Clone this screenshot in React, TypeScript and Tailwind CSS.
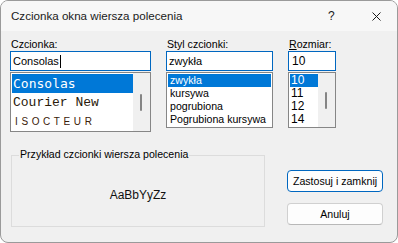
export default function App() {
  const styles = ["zwykła", "kursywa", "pogrubiona", "Pogrubiona kursywa"];
  const sizes = ["10", "11", "12", "14"];
  return (
    <div className="w-[398px] h-[243px] bg-white">
      <div className="w-[398px] h-[243px] rounded-[8px] border border-[#9a9a9a] bg-[#f0f0f0] overflow-hidden flex flex-col font-['Liberation_Sans',Arial,sans-serif] text-[10.6px] text-black">
        {/* title bar */}
        <div className="h-[30px] shrink-0 bg-[#f7f7f7] flex items-center relative">
          <div className="pl-[10px] text-[11.6px] leading-[14px] text-[#1a1a1a]">Czcionka okna wiersza polecenia</div>
          <div className="absolute left-[327px] top-[8px] text-[12px] leading-[14px] text-[#1a1a1a]">?</div>
          <svg className="absolute left-[371px] top-[11px]" width="9" height="9" viewBox="0 0 9 9">
            <path d="M0.5 0.5 L8.5 8.5 M8.5 0.5 L0.5 8.5" stroke="#1a1a1a" strokeWidth="1" fill="none" />
          </svg>
        </div>
        {/* body */}
        <div className="flex-1 pt-[7px] pl-[9px] flex flex-col">
          <div className="flex items-start gap-[15px]">
            {/* font column */}
            <div className="w-[141px] flex flex-col">
              <div className="h-[13px] leading-[13px] pl-[1px]">Czcionka:</div>
              <div className="h-[20px] border border-[#0067c0] bg-white flex items-center pl-[2px] leading-[13px] text-[11px]">
                <span>Consolas</span>
                <span className="inline-block w-[1px] h-[13px] bg-black ml-[1px]" />
              </div>
              <div className="mt-[1px] h-[60px] border border-[#868686] bg-white flex">
                <div className="flex-1 pt-[1px] pl-[1px] flex flex-col">
                  <div className="h-[19px] bg-[#0078d7] text-white pl-[1px] font-['DejaVu_Sans_Mono',monospace] text-[13px] leading-[19px]">Consolas</div>
                  <div className="h-[19px] pl-[1px] font-['Liberation_Mono',monospace] text-[13px] leading-[19px] text-[#2a1a0a]">Courier New</div>
                  <div className="h-[19px] pl-[3px] text-[10px] leading-[19px] tracking-[3.6px] text-[#3a2008]">ISOCTEUR</div>
                </div>
                <div className="w-[17px] bg-[#f0f0f0] relative">
                  <div className="absolute left-[7px] top-[21px] w-[2px] h-[17px] rounded-full bg-[#858585]" />
                </div>
              </div>
            </div>
            {/* style column */}
            <div className="w-[107px] flex flex-col">
              <div className="h-[13px] leading-[13px] pl-[1px]">Styl czcionki:</div>
              <div className="h-[20px] border border-[#0067c0] bg-white flex items-center pl-[2px] leading-[13px] text-[11px]">zwykła</div>
              <div className="mt-[1px] h-[56px] border border-[#868686] bg-white p-[1px] flex flex-col">
                {styles.map((s, i) => (
                  <div
                    key={s}
                    className={
                      i === 0
                        ? "h-[13px] leading-[13px] pl-[2px] bg-[#0078d7] text-white"
                        : "h-[13px] leading-[13px] pl-[2px]"
                    }
                  >
                    {s}
                  </div>
                ))}
              </div>
            </div>
            {/* size column */}
            <div className="w-[48px] flex flex-col">
              <div className="h-[13px] leading-[13px] pl-[1px]">
                <span className="underline">R</span>ozmiar:
              </div>
              <div className="h-[20px] border border-[#0067c0] bg-white flex items-center pl-[3px] text-[12px] leading-[14px]">10</div>
              <div className="mt-[1px] h-[56px] border border-[#868686] bg-white flex">
                <div className="flex-1 pt-[1px] pl-[1px] flex flex-col">
                  {sizes.map((s, i) => (
                    <div
                      key={s}
                      className={
                        i === 0
                          ? "h-[13px] leading-[13px] pl-[1px] text-[12px] bg-[#0078d7] text-white"
                          : "h-[13px] leading-[13px] pl-[1px] text-[12px]"
                      }
                    >
                      {s}
                    </div>
                  ))}
                </div>
                <div className="w-[17px] bg-[#f0f0f0] relative">
                  <div className="absolute left-[7px] top-[19px] w-[2px] h-[17px] rounded-full bg-[#858585]" />
                </div>
              </div>
            </div>
          </div>
          {/* bottom row */}
          <div className="flex items-start mt-[23px]">
            <div className="ml-[1px] w-[254px] h-[72px] border border-[#dcdcdc] relative">
              <div className="absolute left-[7px] -top-[8px] px-[1px] bg-[#f0f0f0] leading-[13px]">Przykład czcionki wiersza polecenia</div>
              <div className="pt-[32px] text-center text-[12px] leading-[14px] text-[#111]">AaBbYyZz</div>
            </div>
            <div className="ml-[22px] mt-[15px] flex flex-col gap-[11px]">
              <div className="w-[96px] h-[22px] rounded-[4px] border border-[#0067c0] bg-[#fdfdfd] flex items-center justify-center leading-[13px]">Zastosuj i zamknij</div>
              <div className="w-[96px] h-[22px] rounded-[4px] border border-[#d0d0d0] border-b-[#b8b8b8] bg-[#fdfdfd] flex items-center justify-center leading-[13px]">Anuluj</div>
            </div>
          </div>
        </div>
      </div>
    </div>
  );
}
